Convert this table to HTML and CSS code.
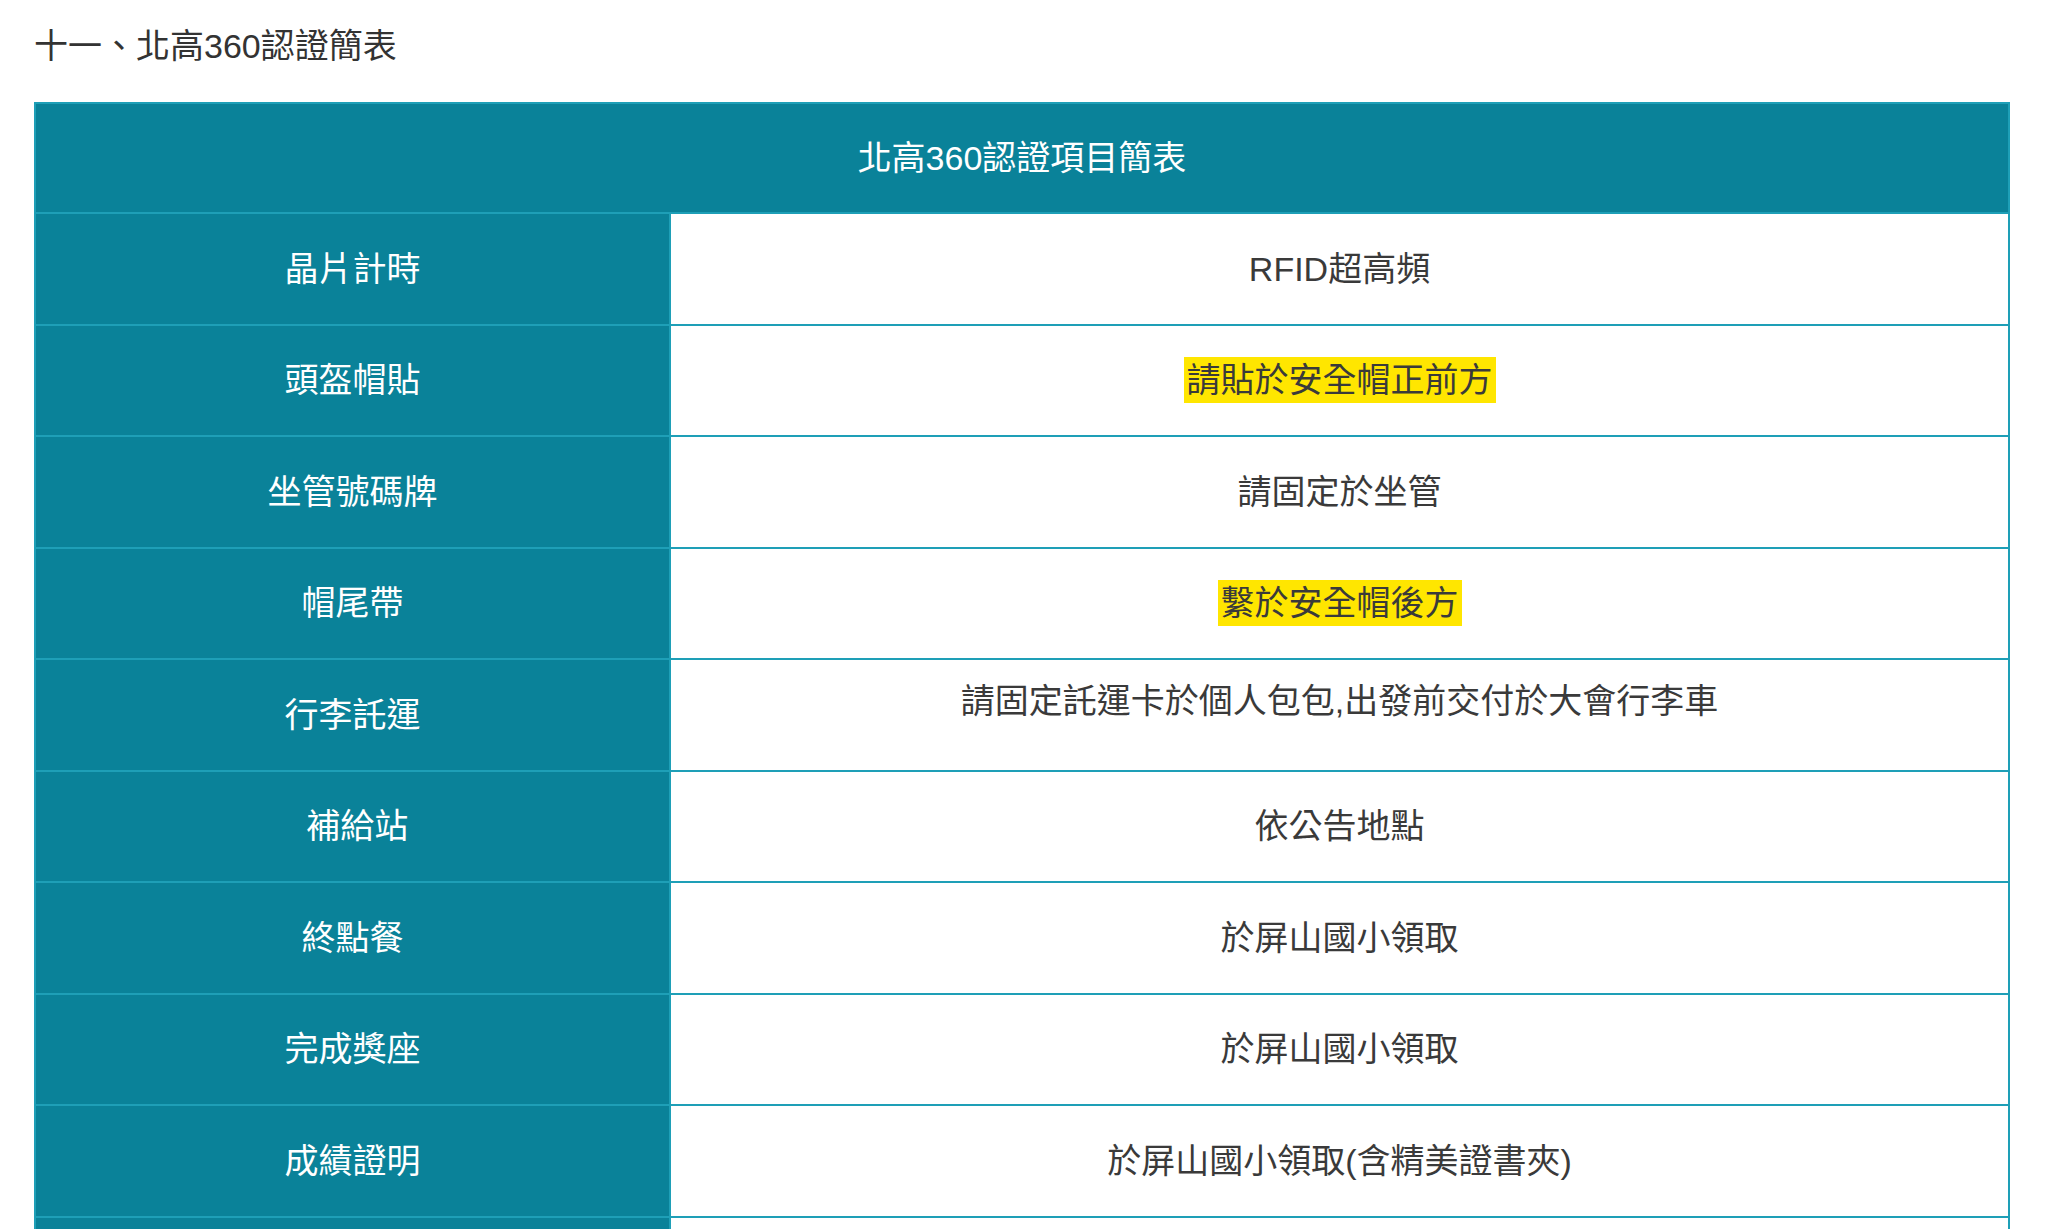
FILE: index.html
```html
<!DOCTYPE html>
<html lang="zh-Hant">
<head>
<meta charset="utf-8">
<title>北高360認證簡表</title>
<link rel="stylesheet" href="styles.css">
</head>
<body>
<div class="page">
  <h2 class="title">十一、北高360認證簡表</h2>
  <table class="cert">
    <colgroup>
      <col class="col-label">
      <col class="col-value">
    </colgroup>
    <thead>
      <tr><th colspan="2" class="head">北高360認證項目簡表</th></tr>
    </thead>
    <tbody>
      <tr><th class="label">晶片計時</th><td class="value">RFID超高頻</td></tr>
      <tr><th class="label">頭盔帽貼</th><td class="value"><span class="mark">請貼於安全帽正前方</span></td></tr>
      <tr><th class="label">坐管號碼牌</th><td class="value">請固定於坐管</td></tr>
      <tr><th class="label">帽尾帶</th><td class="value"><span class="mark">繫於安全帽後方</span></td></tr>
      <tr><th class="label">行李託運</th><td class="value raised">請固定託運卡於個人包包,出發前交付於大會行李車</td></tr>
      <tr><th class="label">&nbsp;補給站</th><td class="value">依公告地點</td></tr>
      <tr><th class="label">終點餐</th><td class="value">於屏山國小領取</td></tr>
      <tr><th class="label">完成獎座</th><td class="value">於屏山國小領取</td></tr>
      <tr><th class="label">成績證明</th><td class="value">於屏山國小領取(含精美證書夾)</td></tr>
      <tr><th class="label">&nbsp;</th><td class="value">&nbsp;</td></tr>
    </tbody>
  </table>
</div>
</body>
</html>
```

FILE: styles.css
```css
html, body {
  margin: 0;
  padding: 0;
  background: #ffffff;
}

body {
  font-family: "Liberation Sans", "Noto Sans CJK TC", sans-serif;
  color: #333333;
}

.page {
  padding: 21px 38px 0 34px;
}

.title {
  margin: 0 0 30px 0;
  font-size: 34px;
  line-height: 51px;
  font-weight: normal;
  color: #333333;
}

.cert {
  width: 1976px;
  border-collapse: collapse;
  table-layout: fixed;
}

.col-label {
  width: 635px;
}

.cert th,
.cert td {
  border: 2px solid #1e9fb7;
  font-size: 34px;
  line-height: 48px;
  font-weight: normal;
  text-align: center;
  vertical-align: middle;
  padding: 0 8px;
  height: 111.5px;
  box-sizing: border-box;
}

.cert .head {
  background: #0a8299;
  color: #ffffff;
  height: 110px;
}

.cert .label {
  background: #0a8299;
  color: #ffffff;
}

.cert .value {
  background: #ffffff;
  color: #3a3a3a;
}

.cert .raised {
  padding-bottom: 28px;
}

.mark {
  background: #ffe600;
  padding: 4px 3px;
}
```
